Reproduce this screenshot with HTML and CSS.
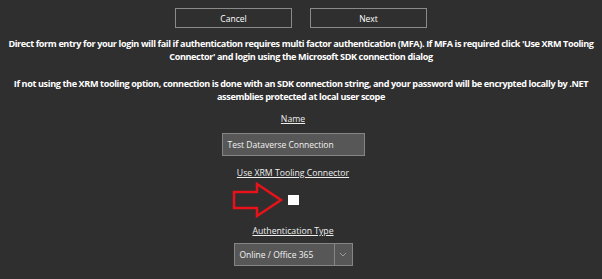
FILE: index.html
```html
<!DOCTYPE html>
<html lang="en">
<head>
    <meta charset="UTF-8">
    <title>Connection</title>
    <link rel="stylesheet" href="styles.css">
</head>
<body>

    <div class="actions">
        <button class="btn">Cancel</button>
        <button class="btn">Next</button>
    </div>

    <p class="note">Direct form entry for your login will fail if authentication requires multi factor authentication (MFA). If MFA is required click 'Use XRM Tooling Connector' and login using the Microsoft SDK connection dialog</p>
    <p class="note">If not using the XRM tooling option, connection is done with an SDK connection string, and your password will be encrypted locally by .NET assemblies protected at local user scope</p>

    <div class="form">
        <label class="field-label name-label">Name</label>
        <div class="text-box">Test Dataverse Connection</div>

        <label class="field-label xrm-label">Use XRM Tooling Connector</label>
        <div class="check-row">
            <svg class="arrow" width="52" height="38" viewBox="0 0 52 38">
                <path d="M2 10 H25 V2 L49 18 L25 34 V26 H2 Z" fill="none" stroke="#e8121b" stroke-width="2.5" stroke-linejoin="miter"/>
            </svg>
            <span class="check-box"></span>
        </div>

        <label class="field-label auth-label">Authentication Type</label>
        <div class="select-box">
            <span class="select-value">Online / Office 365</span>
            <span class="select-toggle">
                <svg width="8" height="5" viewBox="0 0 8 5"><path d="M1 1 L4 4 L7 1" fill="none" stroke="#9a9a9a" stroke-width="1"/></svg>
            </span>
        </div>
    </div>

</body>
</html>
```

FILE: styles.css
```css
* {
    box-sizing: border-box;
}

html, body {
    margin: 0;
    padding: 0;
    background-color: #2f2f2f;
    color: #fff;
    font-family: "Open Sans", Arial, sans-serif;
}

body {
    padding-top: 8px;
}

.actions {
    display: flex;
    justify-content: center;
    gap: 18px;
}

.btn {
    width: 117px;
    height: 20px;
    background-color: #2f2f2f;
    color: #fff;
    border: 1px solid #8a8a8a;
    font-family: "Open Sans", Arial, sans-serif;
    font-size: 8.5px;
    padding: 0;
}

.note {
    margin: 0;
    text-align: center;
    font-size: 9.1px;
    font-weight: bold;
    line-height: 13px;
    letter-spacing: -0.38px;
    padding: 0 3px;
}

.actions + .note {
    margin-top: 9px;
}

.note + .note {
    margin-top: 14px;
}

.form {
    display: flex;
    flex-direction: column;
    align-items: center;
    padding-right: 16px;
}

.field-label {
    font-size: 8.7px;
    text-decoration: underline;
    color: #eee;
    line-height: 13px;
}

.name-label {
    margin-top: 10px;
}

.xrm-label {
    margin-top: 11px;
}

.auth-label {
    margin-top: 5px;
}

.text-box {
    margin-top: 7px;
    width: 143px;
    height: 23px;
    background-color: #575757;
    border: 1px solid #858585;
    font-size: 8.5px;
    line-height: 21px;
    padding-left: 5px;
    color: #f2f2f2;
}

.check-row {
    position: relative;
    width: 11px;
    height: 40px;
    display: flex;
    align-items: center;
    justify-content: center;
}

.check-box {
    width: 11px;
    height: 10px;
    background-color: #fff;
}

.arrow {
    position: absolute;
    right: 15px;
    top: 2px;
}

.select-box {
    margin-top: 5px;
    width: 119px;
    height: 23px;
    display: flex;
    background-color: #575757;
    border: 1px solid #858585;
    font-size: 8.5px;
    color: #f2f2f2;
}

.select-value {
    flex: 1;
    line-height: 21px;
    padding-left: 5px;
    border-right: 1px solid #858585;
}

.select-toggle {
    width: 17px;
    display: flex;
    align-items: center;
    justify-content: center;
}
```
